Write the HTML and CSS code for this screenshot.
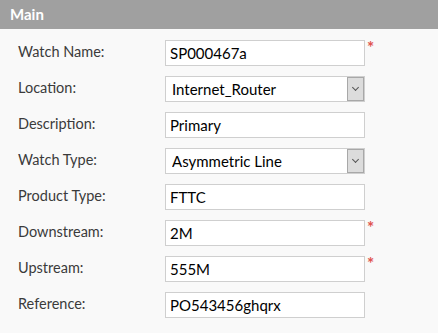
FILE: index.html
```html
<!DOCTYPE html>
<html lang="en">
<head>
    <meta charset="UTF-8">
    <title>Watch - Main</title>
    <link rel="stylesheet" href="styles.css">
</head>
<body>

    <div class="panel">
        <div class="panel-title">Main</div>

        <div class="form">
            <div class="row">
                <label for="watchName">Watch Name:</label>
                <div class="field">
                    <input type="text" id="watchName" value="SP000467a">
                    <span class="req">*</span>
                </div>
            </div>
            <div class="row">
                <label for="location">Location:</label>
                <div class="field">
                    <div class="select-box">
                        <select id="location">
                            <option>Internet_Router</option>
                        </select>
                        <span class="select-btn"></span>
                    </div>
                </div>
            </div>
            <div class="row">
                <label for="description">Description:</label>
                <div class="field">
                    <input type="text" id="description" value="Primary">
                </div>
            </div>
            <div class="row">
                <label for="watchType">Watch Type:</label>
                <div class="field">
                    <div class="select-box">
                        <select id="watchType">
                            <option>Asymmetric Line</option>
                        </select>
                        <span class="select-btn"></span>
                    </div>
                </div>
            </div>
            <div class="row">
                <label for="productType">Product Type:</label>
                <div class="field">
                    <input type="text" id="productType" value="FTTC">
                </div>
            </div>
            <div class="row">
                <label for="downstream">Downstream:</label>
                <div class="field">
                    <input type="text" id="downstream" value="2M">
                    <span class="req">*</span>
                </div>
            </div>
            <div class="row">
                <label for="upstream">Upstream:</label>
                <div class="field">
                    <input type="text" id="upstream" value="555M">
                    <span class="req">*</span>
                </div>
            </div>
            <div class="row">
                <label for="reference">Reference:</label>
                <div class="field">
                    <input type="text" id="reference" value="PO543456ghqrx">
                </div>
            </div>
        </div>
    </div>

</body>
</html>
```

FILE: styles.css
```css
/* Grundstilar */
body {
    font-family: Lato, 'Liberation Sans', Arial, sans-serif;
    background-color: #f9f9f9;
    color: #333;
    margin: 0;
    padding: 0;
}
.panel-title {
    background-color: #a0a0a0;
    color: #fff;
    font-weight: bold;
    font-size: 15px;
    height: 29px;
    line-height: 28px;
    padding-left: 10px;
}
.form {
    padding: 11px 0 0 18px;
}
.row {
    display: flex;
    align-items: flex-start;
    height: 26px;
    margin-bottom: 10px;
}
label {
    width: 147px;
    padding-top: 2.5px;
    font-size: 14.5px;
    color: #3b3b3b;
}
.field {
    position: relative;
    width: 200px;
    height: 26px;
}
input[type="text"], select {
    box-sizing: border-box;
    width: 200px;
    height: 26px;
    margin: 0;
    border: 1px solid #cfcfcf;
    background-color: #fff;
    font-family: Lato, 'Liberation Sans', Arial, sans-serif;
    font-size: 15px;
    color: #000;
    padding: 0 4px;
    outline: none;
}
select {
    -webkit-appearance: none;
    appearance: none;
    padding-left: 6px;
    border-radius: 0;
}
.select-box {
    position: relative;
}
.select-btn {
    position: absolute;
    top: 1px;
    right: 1px;
    width: 17px;
    height: 24px;
    box-sizing: border-box;
    background-color: #dcdcdc;
    border: 1px solid #a8a8a8;
    pointer-events: none;
}
.select-btn::after {
    content: "";
    position: absolute;
    left: 5px;
    top: 7px;
    width: 4px;
    height: 4px;
    border-right: 1px solid #555;
    border-bottom: 1px solid #555;
    transform: rotate(45deg);
}
.req {
    position: absolute;
    left: 202px;
    top: -3px;
    color: #e0524d;
    font-size: 17px;
    font-weight: bold;
}
```
